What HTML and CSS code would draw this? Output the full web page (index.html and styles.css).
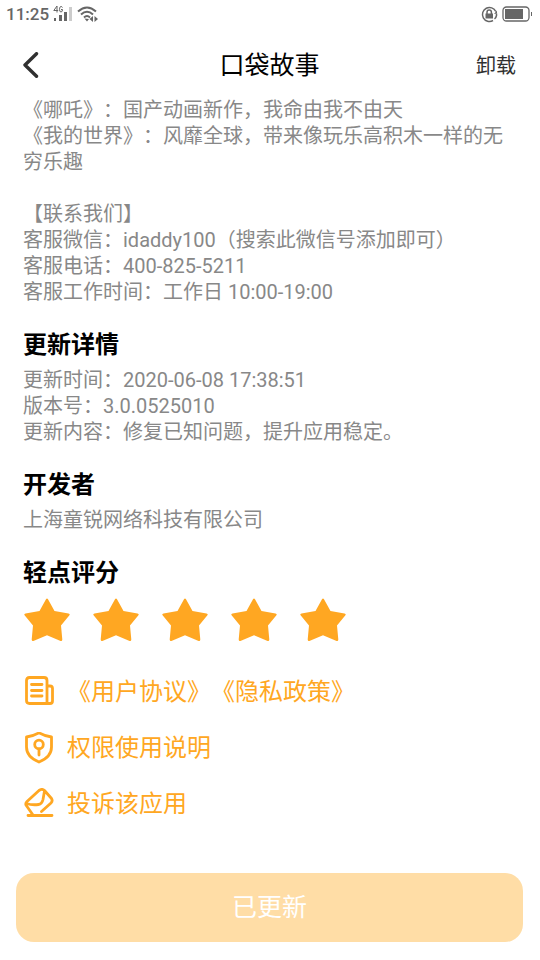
FILE: index.html
```html
<!DOCTYPE html>
<html lang="zh-CN">
<head>
<meta charset="utf-8">
<meta name="viewport" content="width=device-width, initial-scale=1">
<title>口袋故事</title>
<link rel="stylesheet" href="styles.css">
</head>
<body>
<svg class="defs" aria-hidden="true">
  <symbol id="star" viewBox="0 0 46 44">
    <path d="M22 1.200Q23 -.4 24 1.200L30.500 13 44.500 15.400Q46.400 16 45.400 17.200L37 27.500 38.300 41.500Q38.200 43.400 36.600 42.900L23 37.300 9.400 42.900Q7.800 43.400 7.700 41.500L9 27.500 .6 17.200Q-.4 16 1.500 15.400L15.500 13Z" fill="currentColor"/>
  </symbol>
</svg>
<div class="page">
  <div class="status">
    <div class="status-group">
      <span class="clock">11:25</span>
      <svg width="20" height="16" viewBox="0 0 20 16" fill="#666" aria-hidden="true">
        <path d="M4 0 .8 4.500h4.400M4 0v6.500" fill="none" stroke="#666"/>
        <path d="M9.500 1.500Q9 .5 8 .5 6.500.5 6.500 3.300T8 6Q9.500 6 9.500 3.500H8" fill="none" stroke="#666"/>
        <path d="M1 12h2v3H1zM6 9h3v6H6zM11 6h3v9h-3z"/>
        <path d="M16 1h3v14h-3z" fill="#ccc"/>
      </svg>
      <svg width="22" height="17" viewBox="0 0 22 17" fill="none" stroke="#666" stroke-width="2" aria-hidden="true">
        <path d="M1 5.500Q10 -2.500 19 5.500M4 8.500Q10 3 16 8.500M7 11.500Q10 8.500 13 11.500"/>
        <path d="m7.500 12.500 2.500 3 2-2.500zM16 10v6l-3.500-3zM17.500 10v6l3.500-3z" fill="#666" stroke="none"/>
      </svg>
    </div>
    <div class="status-group">
      <svg width="17" height="17" viewBox="0 0 17 17" fill="none" stroke="#666" aria-hidden="true">
        <path d="M14.800 5.500A7 7 0 1 0 12 14.500M15.500 7.500v2Q15 12 13.500 13" stroke-width="1.500"/>
        <path d="m13 8 3-.5v-3z" fill="#666" stroke="none"/>
        <path d="M4.500 7.500h7.500v5H4.500z" fill="#666" stroke="none"/>
        <path d="M6 8V6.200Q6 4 8.200 4t2.200 2.200V8" stroke-width="1.500"/>
      </svg>
      <svg width="31" height="16" viewBox="0 0 31 16" fill="none" stroke="#666" aria-hidden="true">
        <rect x="1" y="1" width="26" height="14" rx="3.500" stroke-width="1.300"/>
        <path d="M3 3h18v10H3z" fill="#666" stroke="none"/>
        <path d="M29.500 6v4"/>
      </svg>
    </div>
  </div>

  <header class="bar">
    <button class="back" type="button" aria-label="返回">
      <svg width="16" height="28" viewBox="0 0 16 28" fill="none" stroke="#303030" stroke-width="3.400" stroke-linecap="round" stroke-linejoin="round" aria-hidden="true"><path d="M13.500 1.700 2 13l11.500 11.300"/></svg>
    </button>
    <h1 class="title">口袋故事</h1>
    <button class="uninstall" type="button">卸载</button>
  </header>

  <main class="content">
    <section>
      <p>《哪吒》：国产动画新作，我命由我不由天<br>《我的世界》：风靡全球，带来像玩乐高积木一样的无穷乐趣</p>
      <p class="contact">【联系我们】<br>客服微信：idaddy100（搜索此微信号添加即可）<br>客服电话：400-825-5211<br>客服工作时间：工作日 10:00-19:00</p>
    </section>
    <section>
      <h2>更新详情</h2>
      <p>更新时间：2020-06-08 17:38:51<br>版本号：3.0.0525010<br>更新内容：修复已知问题，提升应用稳定。</p>
    </section>
    <section>
      <h2>开发者</h2>
      <p>上海童锐网络科技有限公司</p>
    </section>
    <section>
      <h2>轻点评分</h2>
      <div class="stars">
        <button type="button" aria-label="1 星"><svg width="46" height="44"><use href="#star"/></svg></button>
        <button type="button" aria-label="2 星"><svg width="46" height="44"><use href="#star"/></svg></button>
        <button type="button" aria-label="3 星"><svg width="46" height="44"><use href="#star"/></svg></button>
        <button type="button" aria-label="4 星"><svg width="46" height="44"><use href="#star"/></svg></button>
        <button type="button" aria-label="5 星"><svg width="46" height="44"><use href="#star"/></svg></button>
      </div>
    </section>
    <ul class="links">
      <li>
        <svg width="32" height="32" viewBox="0 0 32 32" aria-hidden="true"><path d="M24 27.500H6.500Q3.500 27.500 3.500 24.500V4.500Q3.500 1.500 6.500 1.500H21Q24 1.500 24 4.500ZM24 10H27Q29.500 10 29.500 12.500V25Q29.500 27.500 27 27.500H24M8.500 8.500H19M8.500 14.500H19M8.500 20H19"/></svg>
        <span><a href="#terms">《用户协议》</a><a href="#privacy">《隐私政策》</a></span>
      </li>
      <li>
        <svg width="32" height="32" viewBox="0 0 32 32" aria-hidden="true"><path d="M16 .8Q21.500 4 28.500 5V15Q28.500 25 16 30 3.500 25 3.500 15V5Q10.500 4 16 .8Z"/><circle cx="16" cy="12.500" r="4.300"/><path d="M16 17V23"/></svg>
        <a href="#permissions">权限使用说明</a>
      </li>
      <li>
        <svg width="32" height="32" viewBox="0 0 32 32" aria-hidden="true"><path d="M10 27 3.300 17.500Q2 15.500 4 13.500L16 2.500Q19 .3 21.500 2.500L28.500 10.500Q30 13 28 15L18.500 23.500M3.300 15.500Q9 17.300 15.500 16.500 19 16 20 11.500L21.500 3M5 27.500H29"/></svg>
        <a href="#report">投诉该应用</a>
      </li>
    </ul>
  </main>

  <footer class="footer">
    <button class="update" type="button">已更新</button>
  </footer>
</div>
</body>
</html>
```

FILE: styles.css
```css
* {
  box-sizing: border-box;
}

body {
  margin: 0;
  background: #fff;
  color: #888;
  font-family: Roboto, "Noto Sans CJK SC", sans-serif;
  font-size: 20px;
  line-height: 26px;
  text-spacing-trim: space-all;
}

button {
  padding: 0;
  border: 0;
  background: none;
  color: inherit;
  font: inherit;
}

svg {
  display: block;
}

h1,
h2,
p,
ul {
  margin: 0;
  padding: 0;
}

.defs {
  display: none;
}

.page {
  display: flex;
  flex-direction: column;
  min-height: 100vh;
}

.status {
  display: flex;
  justify-content: space-between;
  height: 28px;
  padding: 0 7px 0 6px;
}

.status-group {
  display: flex;
  align-items: center;
  gap: 4px;
}

.clock {
  color: #666;
  font-size: 17px;
  font-weight: 500;
}

.bar {
  display: grid;
  grid-template-columns: 1fr auto 1fr;
  align-items: center;
  height: 69px;
  padding: 7px 24px 0 23px;
}

.back {
  justify-self: start;
}

.title {
  color: #000;
  font-size: 25px;
  font-weight: 400;
  line-height: 32px;
}

.uninstall {
  justify-self: end;
  color: #303030;
}

.content {
  display: flex;
  flex: 1;
  flex-direction: column;
  gap: 25px;
  padding: 0 23px;
}

.contact {
  margin-top: 26px;
}

h2 {
  margin-bottom: 7px;
  color: #000;
  font-size: 24px;
  font-weight: 700;
  line-height: 30px;
}

.stars {
  display: flex;
  gap: 23px;
  padding: 3px 1px;
  color: #ffa722;
}

.links {
  display: flex;
  flex-direction: column;
  gap: 24px;
  padding-top: 6px;
  color: #ffa722;
  font-size: 24px;
  line-height: 32px;
  list-style: none;
}

.links li {
  display: flex;
  align-items: center;
  gap: 12px;
}

.links svg {
  flex: none;
  fill: none;
  stroke: currentColor;
  stroke-width: 2.8;
  stroke-linecap: round;
  stroke-linejoin: round;
}

.links a {
  color: inherit;
  text-decoration: none;
}

.footer {
  padding: 16px 17px 18px 16px;
}

.update {
  width: 100%;
  height: 69px;
  border-radius: 18px;
  background: #ffdda6;
  color: #fff;
  font-size: 25px;
}
```
